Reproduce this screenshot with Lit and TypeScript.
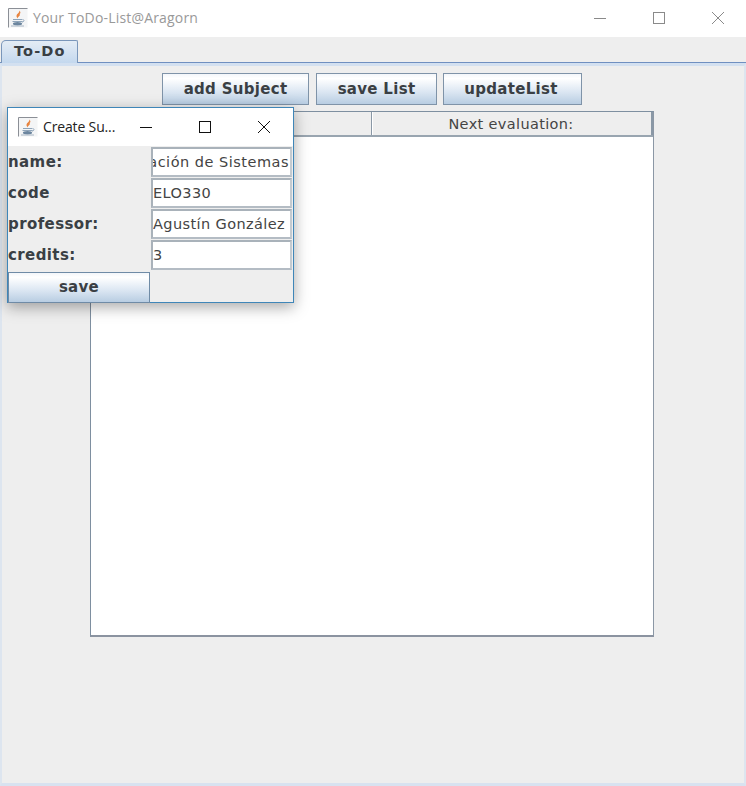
import { LitElement, html, css, svg } from "lit";
import { customElement } from "lit/decorators.js";

const javaIcon = () => html`<svg viewBox="0 0 20 20" width="20" height="20" aria-hidden="true" style="flex:none">
  <rect x="0.5" y="0.5" width="19" height="19" fill="#f4f5f6" stroke="none"/>
  <path d="M0.5 19.5V0.5H19.5" fill="none" stroke="#8b8f96"/>
  <path d="M11 2.5c1.5 2-2.5 3-2.5 5.5 0 1 .6 1.7 1.2 2.4-.2-1.4 3.2-2.6 1.9-4.4 1.4-1.1 1-2.4-.6-3.5z" fill="#e8843f"/>
  <path d="M5 11.5h9M4.5 13.5h10" stroke="#8fa5ba" stroke-width="1.2"/>
  ${svg`<ellipse cx="9.5" cy="15.8" rx="4.6" ry="1.7" fill="#6c869f"/>`}
  <path d="M3 18h13" stroke="#a8b6c4" stroke-width="1"/>
  <path d="M14.5 11.5c2 0 2 2.4-.5 2.6" fill="none" stroke="#8fa5ba"/>
</svg>`;

const winControls = (cls: string) => html`<div class="controls ${cls}">
  <svg viewBox="0 0 14 14" width="14" height="14"><path d="M1 7.5H13" stroke="currentColor" fill="none"/></svg>
  <svg viewBox="0 0 14 14" width="14" height="14"><rect x="1.5" y="1.5" width="11" height="11" stroke="currentColor" fill="none"/></svg>
  <svg viewBox="0 0 14 14" width="14" height="14"><path d="M1 1L13 13M13 1L1 13" stroke="currentColor" fill="none"/></svg>
</div>`;

@customElement("app-root")
export class AppRoot extends LitElement {
  static styles = css`
    :host {
      display: block;
      position: relative;
      width: 746px;
      height: 786px;
      overflow: hidden;
      background: #eeeeee;
      font-family: "DejaVu Sans", sans-serif;
      color: #333;
    }
    .window { display: flex; flex-direction: column; height: 786px; }
    .titlebar {
      height: 37px;
      flex: none;
      background: #fff;
      display: flex;
      align-items: center;
      padding: 0 0 2px 8px;
      box-sizing: border-box;
      font-family: "Open Sans", "Noto Sans", sans-serif;
      font-size: 14px;
      letter-spacing: 0.18px;
      color: #999;
    }
    .titlebar .t { margin-left: 5px; flex: 1; }
    .controls { display: flex; align-items: center; }
    .controls svg { flex: none; }
    .main-c { color: #8a8a8a; padding-right: 21px; gap: 45px; }
    .tabstrip {
      height: 25px;
      flex: none;
      background: #eeeeee;
      border-bottom: 1px solid #6f8fc0;
      display: flex;
      align-items: flex-end;
      padding-left: 1px;
    }
    .tab {
      width: 77px;
      height: 23px;
      box-sizing: border-box;
      border: 1px solid #7a96ba;
      border-bottom: none;
      border-radius: 5px 2px 0 0;
      background: linear-gradient(#e4ecf5, #c4d8ee);
      font-weight: 700;
      font-size: 14.5px;
      letter-spacing: 1.1px;
      line-height: 21px;
      padding-left: 12px;
      color: #3a3f44;
      margin-bottom: -1px;
    }
    .panel {
      flex: 1;
      box-sizing: border-box;
      border-top: 3px solid #d3e0f0;
      border-left: 2px solid #dde5ef;
      border-right: 2px solid #dde5ef;
      border-bottom: 3px solid #d8e2f0;
      background: #eeeeee;
      display: flex;
      flex-direction: column;
      padding-top: 7px;
    }
    .toolbar {
      display: flex;
      padding-left: 160px;
      gap: 7px;
    }
    .btn {
      height: 32px;
      box-sizing: border-box;
      border: 1px solid #7f93a8;
      background: linear-gradient(#f3f6fa 0%, #ffffff 15%, #dbe6f2 60%, #b8cde2 100%);
      font: 700 15px/30px "DejaVu Sans", sans-serif;
      letter-spacing: 0.3px;
      color: #3a3f44;
      text-align: center;
      padding: 0;
    }
    .b1 { width: 147px; }
    .b2 { width: 121px; margin-right: -1px; }
    .b3 { width: 139px; padding-right: 3px; }
    .table {
      margin: 6px 0 0 88px;
      width: 564px;
      height: 526px;
      box-sizing: border-box;
      border: 1px solid #7e8fa0;
      border-right-color: #8b97a5;
      border-bottom: 2px solid #8b93a0;
      background: #fff;
      display: flex;
      flex-direction: column;
    }
    .thead {
      height: 25px;
      flex: none;
      display: flex;
      box-sizing: border-box;
      background: #eeeeee;
      border-bottom: 2px solid #99a5b0;
    }
    .th {
      box-sizing: border-box;
      text-align: center;
      font-size: 14.5px;
      letter-spacing: 0.35px;
      line-height: 24px;
      color: #444;
      border-left: 1px solid #fff;
      border-right: 1px solid #8a98a6;
    }
    .th.a { width: 281px; }
    .th.b { flex: 1; border-right-width: 2px; padding-right: 2px; }
    .dialog {
      position: absolute;
      left: 7px;
      top: 107px;
      width: 287px;
      height: 196px;
      box-sizing: border-box;
      border: 1px solid #3f86b8;
      background: #eeeeee;
      box-shadow: 0 4px 14px rgba(0, 0, 0, 0.35);
      display: flex;
      flex-direction: column;
    }
    .d-title {
      height: 38px;
      flex: none;
      background: #fff;
      display: flex;
      align-items: center;
      padding: 0 0 1px 10px;
      box-sizing: border-box;
      font-family: "Open Sans", "Noto Sans", sans-serif;
      font-size: 14px;
      letter-spacing: -0.15px;
      color: #222;
    }
    .d-title .t { margin-left: 5px; width: 96px; flex: none; white-space: nowrap; }
    .d-c { color: #111; gap: 45px; }
    .form {
      display: grid;
      grid-template-columns: 143px 141px;
      grid-auto-rows: 31px;
      padding-top: 1px;
    }
    .label {
      font-weight: 700;
      font-size: 15px;
      letter-spacing: 0.4px;
      line-height: 31px;
      color: #3a3f44;
    }
    .field {
      height: 30px;
      box-sizing: border-box;
      border: 2px solid #b4bcc4;
      border-color: #a9b2ba #c4cbd1 #b4bcc4 #a9b2ba;
      background: #fff;
      font-size: 14.5px;
      letter-spacing: 0.4px;
      line-height: 26px;
      color: #444;
      overflow: hidden;
      white-space: nowrap;
      display: flex;
    }
    .field.clip { justify-content: flex-end; padding-right: 1px; letter-spacing: 0.5px; }
    .field span { flex: none; }
    .save {
      width: 142px;
      height: 31px;
      line-height: 29px;
      border-color: #6f8ba6;
      margin-top: 1px;
    }
  `;

  render() {
    return html`
      <div class="window">
        <div class="titlebar">
          ${javaIcon()}
          <span class="t">Your ToDo-List@Aragorn</span>
          ${winControls("main-c")}
        </div>
        <div class="tabstrip"><div class="tab">To-Do</div></div>
        <div class="panel">
          <div class="toolbar">
            <button class="btn b1">add Subject</button>
            <button class="btn b2">save List</button>
            <button class="btn b3">updateList</button>
          </div>
          <div class="table">
            <div class="thead">
              <div class="th a"></div>
              <div class="th b">Next evaluation:</div>
            </div>
          </div>
        </div>
      </div>
      <div class="dialog">
        <div class="d-title">
          ${javaIcon()}
          <span class="t">Create Su...</span>
          ${winControls("d-c")}
        </div>
        <div class="form">
          <div class="label">name:</div>
          <div class="field clip"><span>Programación de Sistemas</span></div>
          <div class="label">code</div>
          <div class="field"><span>ELO330</span></div>
          <div class="label">professor:</div>
          <div class="field"><span>Agustín González</span></div>
          <div class="label">credits:</div>
          <div class="field"><span>3</span></div>
          <button class="btn save">save</button>
        </div>
      </div>
    `;
  }
}
